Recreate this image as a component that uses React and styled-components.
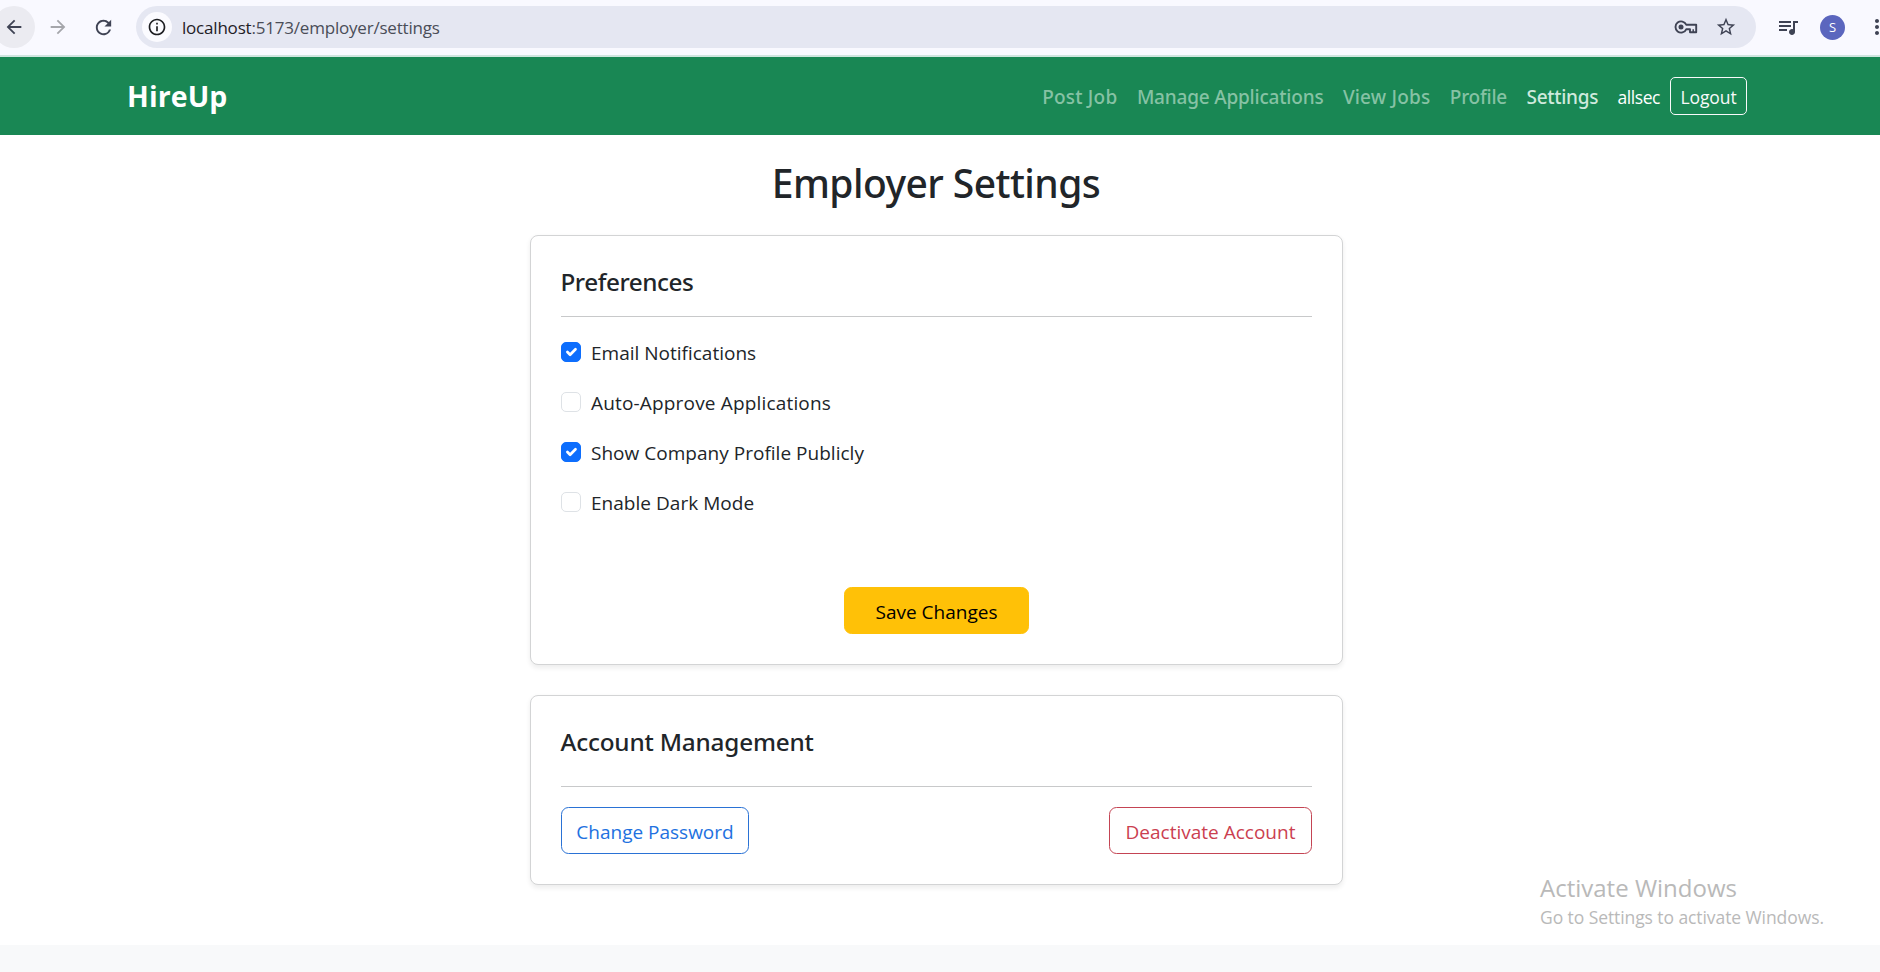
import React, { useState } from "react";
import styled, { createGlobalStyle, css } from "styled-components";
import {
  MdArrowBack,
  MdArrowForward,
  MdRefresh,
  MdInfoOutline,
  MdStarBorder,
  MdQueueMusic,
  MdMoreVert,
} from "react-icons/md";

const GlobalStyle = createGlobalStyle`
  *, *::before, *::after { box-sizing: border-box; }
  html, body { margin: 0; height: 100%; overflow: hidden; }
  body {
    background: #fff;
    color: #212529;
    font-family: "Open Sans", "Noto Sans", sans-serif;
    font-size: 19px;
    line-height: 30px;
  }
`;

const medium = css`
  font-family: "Noto Sans", "Open Sans", sans-serif;
  font-weight: 500;
`;

const Screen = styled.div`
  display: flex;
  flex-direction: column;
  height: 972px;
  overflow: hidden;
`;

/* Browser toolbar */

const BrowserBar = styled.header`
  display: flex;
  align-items: center;
  flex: none;
  height: 57px;
  padding-bottom: 1px;
  background: #f9f9ff;
  border-bottom: 2px solid #cfe5df;
  color: #3f4354;
  overflow: hidden;
`;

const RoundButton = styled.button`
  display: grid;
  place-items: center;
  flex: none;
  width: 42px;
  height: 42px;
  margin: 0 0 0 ${(p) => p.$gap ?? 0}px;
  padding: 0;
  border: 0;
  border-radius: 50%;
  background: ${(p) => (p.$active ? "#ebebf1" : "transparent")};
  color: ${(p) => (p.$dim ? "#a5a6ab" : "inherit")};
`;

const AddressBar = styled.div`
  display: flex;
  align-items: center;
  flex: none;
  width: 1620px;
  height: 42px;
  margin-left: 12px;
  padding: 0 19px 0 6px;
  border-radius: 21px;
  background: #e5e7f2;
`;

const SiteInfo = styled.span`
  display: grid;
  place-items: center;
  width: 30px;
  height: 30px;
  border-radius: 50%;
  background: #fbfbff;
  color: #1d1e22;
`;

const Url = styled.span`
  flex: 1;
  margin-left: 10px;
  padding-top: 1px;
  font-size: 17px;
  letter-spacing: -0.2px;
  color: #4a4d58;

  b {
    font-weight: 400;
    color: #1f2026;
  }
`;

const AddressIcons = styled.span`
  display: flex;
  align-items: center;
  gap: 17px;
`;

const BrowserActions = styled.div`
  display: flex;
  align-items: center;
  flex: none;
  margin-left: 20px;
`;

const Avatar = styled.span`
  display: grid;
  place-items: center;
  width: 25px;
  height: 25px;
  margin: 0 20px 0 20px;
  border-radius: 50%;
  background: #5b66be;
  color: #fff;
  font-size: 13px;
  line-height: 1;
`;

/* Site navigation */

const Navbar = styled.nav`
  display: flex;
  align-items: center;
  justify-content: space-between;
  flex: none;
  height: 78px;
  padding: 0 133px 0 127px;
  background: #198754;
  color: #fff;
`;

const Brand = styled.a`
  font-size: 28.5px;
  font-weight: 700;
  letter-spacing: 0.1px;
`;

const NavLinks = styled.div`
  display: flex;
  align-items: center;
`;

const NavLink = styled.a`
  ${medium}
  margin-right: 19.5px;
  padding-top: 2px;
  letter-spacing: ${(p) => p.$track}px;
  color: ${(p) => (p.$current ? "#cfeadd" : "#86c2a4")};
`;

const UserName = styled.span`
  margin-right: 10px;
  padding-top: 1px;
  font-size: 17.5px;
  letter-spacing: -0.45px;
`;

const LogoutButton = styled.button`
  display: grid;
  place-items: center;
  width: 77px;
  height: 38px;
  padding: 1px 0 0;
  border: 1px solid #f8f9fa;
  border-radius: 5px;
  background: transparent;
  color: #f8f9fa;
  font: inherit;
  font-size: 17.5px;
  letter-spacing: -0.1px;
`;

/* Settings page */

const Page = styled.main`
  display: flex;
  flex-direction: column;
  align-items: center;
  flex: none;
  height: 810px;
  padding: 24px 8px 0 0;
`;

const PageTitle = styled.h1`
  ${medium}
  margin: 0 0 28px;
  font-size: 39px;
  line-height: 48px;
  letter-spacing: -0.55px;
`;

const Card = styled.section`
  width: 813px;
  height: ${(p) => p.$height}px;
  margin-bottom: 30px;
  padding: 30px;
  border: 1px solid #d3d4d5;
  border-radius: 8px;
  background: #fff;
  box-shadow: 0 2.5px 5px rgba(0, 0, 0, 0.075);
`;

const CardTitle = styled.h2`
  ${medium}
  margin: 0;
  padding: 1px 0 ${(p) => p.$space}px;
  border-bottom: 1px solid #c8c9ca;
  font-size: 24.3px;
  line-height: 30px;
  letter-spacing: ${(p) => p.$track}px;
`;

const OptionList = styled.div`
  display: flex;
  flex-direction: column;
  gap: 20px;
  margin-top: 20px;
`;

const Option = styled.label`
  display: flex;
  align-items: center;
  gap: 10.5px;
  height: 30px;
  letter-spacing: ${(p) => p.$track}px;
`;

const Box = styled.span`
  display: grid;
  place-items: center;
  width: 20px;
  height: 20px;
  border: 1px solid ${(p) => (p.$checked ? "#0d6efd" : "#dee2e6")};
  border-radius: 5px;
  background: ${(p) => (p.$checked ? "#0d6efd" : "#fff")};
`;

const OptionText = styled.span`
  padding-top: 1px;
`;

const HiddenInput = styled.input`
  display: none;
`;

const Actions = styled.div`
  display: flex;
  justify-content: ${(p) => p.$justify};
  margin-top: ${(p) => p.$top}px;
`;

const tones = {
  warning: { text: "#000", line: "#ffc107", fill: "#ffc107" },
  primary: { text: "#2271e0", line: "#2a72d5", fill: "transparent" },
  danger: { text: "#cb4050", line: "#c44453", fill: "transparent" },
};

const Button = styled.button`
  width: ${(p) => p.$width}px;
  height: 47px;
  padding: 2px 0 0 1px;
  border: 1px solid ${(p) => tones[p.$tone].line};
  border-radius: 7.5px;
  background: ${(p) => tones[p.$tone].fill};
  color: ${(p) => tones[p.$tone].text};
  font: inherit;
`;

const Footer = styled.footer`
  flex: 1;
  background: #f8f9fa;
`;

const Watermark = styled.aside`
  position: absolute;
  left: 1540px;
  top: 873px;
  color: #b9b9b9;
  white-space: nowrap;
`;

const WatermarkTitle = styled.div`
  font-size: 24px;
  line-height: 30px;
`;

const WatermarkText = styled.div`
  font-size: 17.5px;
  line-height: 29px;
  letter-spacing: -0.08px;
`;

const links = [
  { label: "Post Job", track: 0.2 },
  { label: "Manage Applications", track: -0.2 },
  { label: "View Jobs", track: 0.18 },
  { label: "Profile", track: -0.23 },
  { label: "Settings", track: -0.3, current: true },
];

const preferences = [
  { label: "Email Notifications", on: true, track: 0 },
  { label: "Auto-Approve Applications", on: false, track: 0.17 },
  { label: "Show Company Profile Publicly", on: true, track: 0.02 },
  { label: "Enable Dark Mode", on: false, track: 0.03 },
];

function Check() {
  return (
    <svg width="18" height="18" viewBox="0 0 20 20" fill="none">
      <path
        d="m6 10 3 3 6-6"
        stroke="#fff"
        strokeWidth="3"
        strokeLinecap="round"
        strokeLinejoin="round"
      />
    </svg>
  );
}

function KeyIcon() {
  return (
    <svg width="24" height="16" viewBox="0 0 24 16" fill="none" stroke="currentColor">
      <path
        d="M12.2 5.7A5.6 5.6 0 1 0 12.2 10.3H16V13.2H22.2V5.7Z"
        strokeWidth="1.9"
        strokeLinejoin="round"
      />
      <path d="M19.2 10.3V13" strokeWidth="1.5" />
      <circle cx="7" cy="8" r="2.5" fill="currentColor" stroke="none" />
    </svg>
  );
}

function Preference({ label, on, track }) {
  const [checked, setChecked] = useState(on);
  return (
    <Option $track={track}>
      <HiddenInput type="checkbox" checked={checked} onChange={() => setChecked(!checked)} />
      <Box $checked={checked}>{checked && <Check />}</Box>
      <OptionText>{label}</OptionText>
    </Option>
  );
}

export default function App() {
  return (
    <Screen>
      <GlobalStyle />
      <BrowserBar>
        <RoundButton $active $gap={-7}>
          <MdArrowBack size={22} />
        </RoundButton>
        <RoundButton $dim $gap={2}>
          <MdArrowForward size={22} />
        </RoundButton>
        <RoundButton $gap={3}>
          <MdRefresh size={23} />
        </RoundButton>
        <AddressBar>
          <SiteInfo>
            <MdInfoOutline size={20} />
          </SiteInfo>
          <Url>
            <b>localhost</b>:5173/employer/settings
          </Url>
          <AddressIcons>
            <KeyIcon />
            <MdStarBorder size={22} />
          </AddressIcons>
        </AddressBar>
        <BrowserActions>
          <MdQueueMusic size={24} />
          <Avatar>S</Avatar>
          <MdMoreVert size={24} />
        </BrowserActions>
      </BrowserBar>

      <Navbar>
        <Brand>HireUp</Brand>
        <NavLinks>
          {links.map((l) => (
            <NavLink key={l.label} $track={l.track} $current={l.current}>
              {l.label}
            </NavLink>
          ))}
          <UserName>allsec</UserName>
          <LogoutButton>Logout</LogoutButton>
        </NavLinks>
      </Navbar>

      <Page>
        <PageTitle>Employer Settings</PageTitle>
        <Card $height={430}>
          <CardTitle $space={19} $track={-0.45}>
            Preferences
          </CardTitle>
          <OptionList>
            {preferences.map((p) => (
              <Preference key={p.label} {...p} />
            ))}
          </OptionList>
          <Actions $justify="center" $top={70}>
            <Button $tone="warning" $width={185}>
              Save Changes
            </Button>
          </Actions>
        </Card>
        <Card $height={190}>
          <CardTitle $space={29} $track={-0.19}>
            Account Management
          </CardTitle>
          <Actions $justify="space-between" $top={20}>
            <Button $tone="primary" $width={188}>
              Change Password
            </Button>
            <Button $tone="danger" $width={203}>
              Deactivate Account
            </Button>
          </Actions>
        </Card>
      </Page>
      <Footer />

      <Watermark>
        <WatermarkTitle>Activate Windows</WatermarkTitle>
        <WatermarkText>Go to Settings to activate Windows.</WatermarkText>
      </Watermark>
    </Screen>
  );
}
